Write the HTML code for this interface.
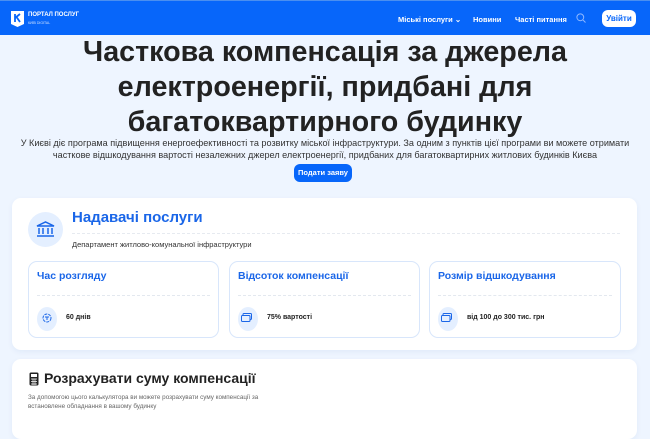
<!DOCTYPE html>
<html><head><meta charset="utf-8"><style>
*{margin:0;padding:0;box-sizing:border-box}
body{width:650px;height:420px;overflow:hidden;background:#eef5ff;font-family:"Liberation Sans",sans-serif;position:relative;color:#1d1d1f}
.hdr{position:absolute;left:0;top:0;width:650px;height:35px;background:#0766fa;border-top:1px solid #4a8ff0}
.hdr .t{position:absolute;color:#fff;font-size:7.5px;font-weight:bold;top:14px}
.btn{position:absolute;background:#fff;color:#0766fa;font-weight:bold;font-size:8px;border-radius:6px;left:602px;top:9px;width:34px;height:17px;text-align:center;line-height:17px}
h1{position:absolute;left:0;width:650px;top:35px;text-align:center;font-size:28.7px;line-height:35px;font-weight:bold;color:#222}
.desc{position:absolute;left:0;width:650px;top:137px;text-align:center;font-size:9.1px;line-height:12px;color:#333}
.sub{position:absolute;left:294px;top:164px;width:58px;height:18px;background:#0766fa;color:#fff;border-radius:6px;font-size:7.5px;font-weight:bold;text-align:center;line-height:18px}
.card{position:absolute;background:#fff;border-radius:9px;box-shadow:0 2px 6px rgba(0,60,160,.06)}
.circ{position:absolute;border-radius:50%;background:#e4efff}
.sc{position:absolute;top:261px;height:77px;border:1px solid #d8e6fb;border-radius:9px;background:#fff}
.sc .h{position:absolute;left:8px;top:8px;font-size:10.5px;font-weight:bold;color:#1a66e8}
.sc .d{position:absolute;left:8px;right:8px;top:33px;border-top:1px dashed #e3e8ef}
.sc .c{position:absolute;left:8px;top:45px;width:20px;height:24px;border-radius:50%;background:#e4efff}
.sc .v{position:absolute;left:37px;top:52px;font-size:7px;font-weight:bold;color:#222}
</style></head><body>
<div class="hdr">
<svg style="position:absolute;left:11px;top:10px" width="13" height="16" viewBox="0 0 13 16"><path d="M0 0H13V13L6.5 16 0 13Z" fill="#fff"/><path d="M4 3V11M4 7L9 3M5.5 6L9 11" stroke="#0766fa" stroke-width="1.8" fill="none"/></svg>
<div class="t" style="left:28px;top:11px;font-size:6px">ПОРТАЛ ПОСЛУГ</div>
<div class="t" style="left:28px;top:20px;font-size:3.5px;font-weight:normal;opacity:.8">КИЇВ DIGITAL</div>
<div class="t" style="left:398px">Міські послуги ⌄</div>
<div class="t" style="left:473px">Новини</div>
<div class="t" style="left:515px">Часті питання</div>
<svg style="position:absolute;left:576px;top:12px" width="10" height="10" viewBox="0 0 10 10"><circle cx="4.3" cy="4.3" r="3.4" stroke="#8fb8ff" fill="none" stroke-width="1"/><path d="M6.8 6.8L9.5 9.5" stroke="#8fb8ff"/></svg>
<div class="btn">Увійти</div>
</div>
<h1>Часткова компенсація за джерела<br>електроенергії, придбані для<br>багатоквартирного будинку</h1>
<div class="desc">У Києві діє програма підвищення енергоефективності та розвитку міської інфраструктури. За одним з пунктів цієї програми ви можете отримати<br>часткове відшкодування вартості незалежних джерел електроенергії, придбаних для багатоквартирних житлових будинків Києва</div>
<div class="sub">Подати заяву</div>
<div class="card" style="left:12px;top:198px;width:625px;height:152px"></div>
<div class="circ" style="left:28px;top:212px;width:35px;height:35px"></div>
<svg style="position:absolute;left:36px;top:221px" width="19" height="17" viewBox="0 0 19 17"><path d="M1 5L9.5 1 18 5ZM3 7V13M7 7V13M12 7V13M16 7V13M1 15H18" stroke="#1a66e8" stroke-width="1.5" fill="none"/></svg>
<div style="position:absolute;left:72px;top:209px;font-size:15px;font-weight:bold;color:#1a66e8">Надавачі послуги</div>
<div style="position:absolute;left:72px;right:30px;top:233px;border-top:1px dashed #e6eaf0"></div>
<div style="position:absolute;left:72px;top:240px;font-size:7.5px;color:#333">Департамент житлово-комунальної інфраструктури</div>
<div class="sc" style="left:28px;width:191px"><div class="h">Час розгляду</div><div class="d"></div><div class="c"></div><div class="v">60 днів</div></div>
<div class="sc" style="left:229px;width:191px"><div class="h">Відсоток компенсації</div><div class="d"></div><div class="c"></div><div class="v">75% вартості</div></div>
<div class="sc" style="left:429px;width:192px"><div class="h">Розмір відшкодування</div><div class="d"></div><div class="c"></div><div class="v">від 100 до 300 тис. грн</div></div>
<svg style="position:absolute;left:42px;top:313px" width="10" height="10"><circle cx="5" cy="5" r="4" stroke="#1a66e8" fill="none" stroke-dasharray="3 1"/><path d="M3 4H7M5 4V7" stroke="#1a66e8"/></svg>
<svg style="position:absolute;left:241px;top:313px" width="11" height="9"><rect x="2" y="0.5" width="8.5" height="6" rx="1" stroke="#1a66e8" fill="none"/><rect x="0.5" y="2.5" width="8.5" height="6" rx="1" stroke="#1a66e8" fill="#e4efff"/></svg>
<svg style="position:absolute;left:441px;top:313px" width="11" height="9"><rect x="2" y="0.5" width="8.5" height="6" rx="1" stroke="#1a66e8" fill="none"/><rect x="0.5" y="2.5" width="8.5" height="6" rx="1" stroke="#1a66e8" fill="#e4efff"/></svg>
<div class="card" style="left:12px;top:359px;width:625px;height:80px"></div>
<svg style="position:absolute;left:29px;top:372px" width="10" height="14"><rect x="0.5" y="0.5" width="9" height="13" rx="1.5" fill="#222"/><rect x="2" y="2" width="6" height="3" fill="#fff"/><path d="M2 7H8M2 9.5H8M2 12H8M4 6.5V13M6 6.5V13" stroke="#fff" stroke-width=".7"/></svg>
<div style="position:absolute;left:44px;top:370px;font-size:14px;font-weight:bold;color:#222">Розрахувати суму компенсації</div>
<div style="position:absolute;left:28px;top:393px;font-size:6.3px;line-height:9px;color:#666">За допомогою цього калькулятора ви можете розрахувати суму компенсації за<br>встановлене обладнання в вашому будинку</div>
</body></html>
